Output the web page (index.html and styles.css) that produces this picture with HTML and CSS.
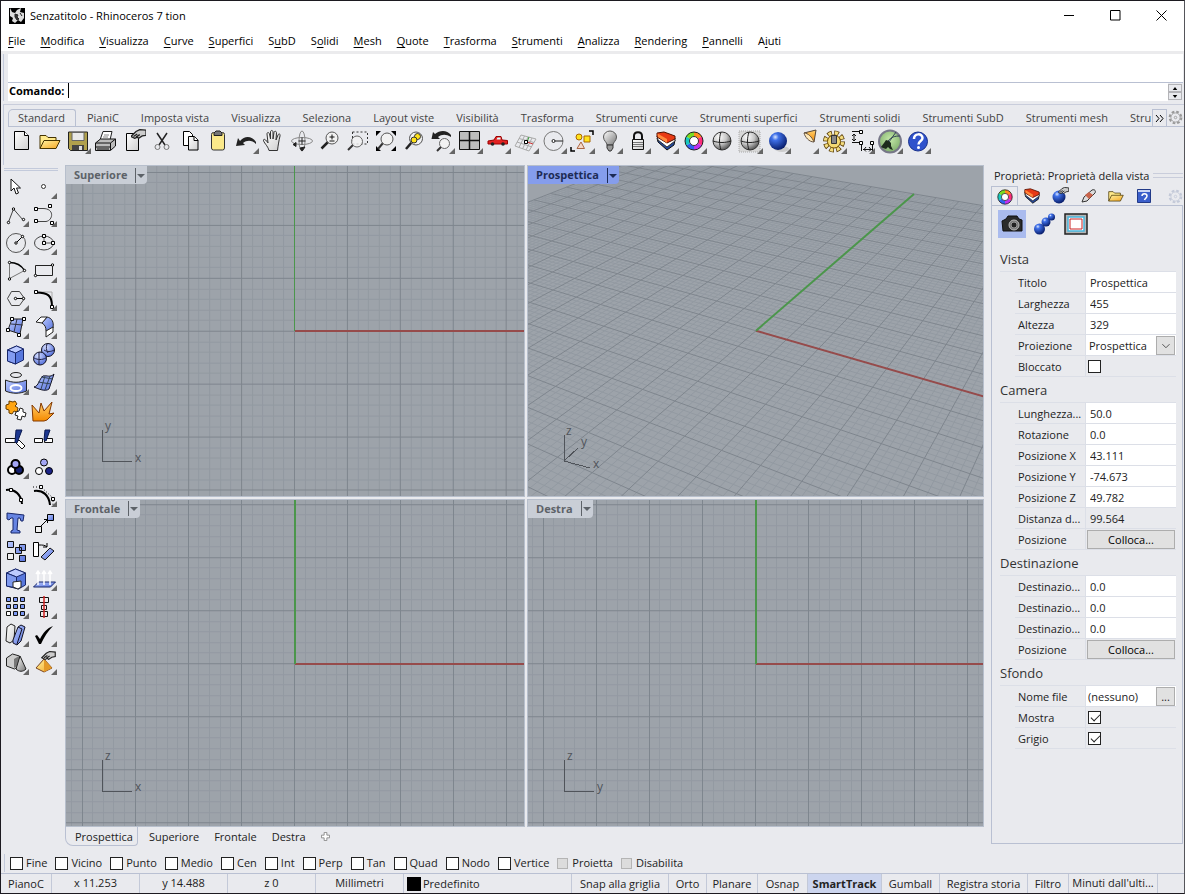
FILE: index.html
```html
<!doctype html>
<html lang="it">
<head>
	<title>Senzatitolo - Rhinoceros 7 tion</title>
	<meta charset="utf-8" />
	<link rel="stylesheet" href="styles.css">
</head>
<body>
	<svg class="defs" aria-hidden="true">
		<defs>
			<linearGradient id="paper" x2="1" y2="1"><stop offset="0" stop-color="#fff"/><stop offset="1" stop-color="#cfcfcf"/></linearGradient>
			<linearGradient id="yellow" x2="1" y2="1"><stop offset="0" stop-color="#fff3a0"/><stop offset="1" stop-color="#f5a623"/></linearGradient>
			<linearGradient id="orange" x2="0" y2="1"><stop offset="0" stop-color="#ffd070"/><stop offset="1" stop-color="#f58a00"/></linearGradient>
			<linearGradient id="blue" x2="1" y2="1"><stop offset="0" stop-color="#bccbff"/><stop offset="1" stop-color="#5672dc"/></linearGradient>
			<linearGradient id="grey" x2="1" y2="1"><stop offset="0" stop-color="#fff"/><stop offset="1" stop-color="#777"/></linearGradient>
			<radialGradient id="ballblue" cx=".35" cy=".28" r=".75"><stop offset="0" stop-color="#dbe7ff"/><stop offset=".25" stop-color="#3f70e8"/><stop offset="1" stop-color="#061a66"/></radialGradient>
			<radialGradient id="ballgrey" cx=".35" cy=".28" r=".8"><stop offset="0" stop-color="#fff"/><stop offset=".5" stop-color="#c5c5c5"/><stop offset="1" stop-color="#444"/></radialGradient>
			<radialGradient id="balllight" cx=".35" cy=".28" r=".8"><stop offset="0" stop-color="#d5deff"/><stop offset="1" stop-color="#4a67d8"/></radialGradient>
			<radialGradient id="green" cx=".5" cy=".4" r=".6"><stop offset="0" stop-color="#c4e8a8"/><stop offset="1" stop-color="#7fae6c"/></radialGradient>
			<symbol id="more" viewBox="0 0 28 28"><path d="M27 20v6h-6z" fill="#666"/></symbol>
			<symbol id="wheel" viewBox="0 0 20 20">
				<g fill="none" stroke-width="5"><path d="M10 3.500A6.500 6.500 0 0 1 15.600 6.700" stroke="#ff8c1a"/><path d="M15.600 6.700A6.500 6.500 0 0 1 15.600 13.200" stroke="#ff2d7a"/><path d="M15.600 13.200A6.500 6.500 0 0 1 10 16.500" stroke="#c030f0"/><path d="M10 16.500A6.500 6.500 0 0 1 4.400 13.200" stroke="#3060f0"/><path d="M4.400 13.200A6.500 6.500 0 0 1 4.400 6.700" stroke="#18c8c0"/><path d="M4.400 6.700A6.500 6.500 0 0 1 10 3.500" stroke="#7ade20"/></g>
				<circle cx="10" cy="10" r="9" fill="none" stroke="#222"/><circle cx="10" cy="10" r="4.500" fill="#fff" stroke="#333"/>
			</symbol>
			<symbol id="layers" viewBox="0 0 20 20">
				<path d="M1 7l10 6 8-4-1 5-7 5L2 11z" fill="#24489c" stroke="#111"/><path d="M1 5l10 6 8-4v3l-8 6L2 9z" fill="#fff" stroke="#333"/><path d="M1 2l7-1 11 4v3l-8 4L1 6z" fill="#e83a14" stroke="#501000"/><path d="M1.500 2.500L11 8v4L2 6z" fill="#ff8a3c"/>
			</symbol>
			<symbol id="cog" viewBox="0 0 18 18">
				<circle cx="9" cy="9" r="7" fill="none" stroke="currentColor" stroke-width="2.500" stroke-dasharray="3.200 2.300"/><circle cx="9" cy="9" r="5.500" fill="none" stroke="currentColor"/><circle cx="9" cy="9" r="1.500" fill="none" stroke="currentColor"/>
			</symbol>
			<symbol id="hand" viewBox="0 0 12 8"><path d="M0 6l4-4 3-1.500L12 1v4l-3 .5-3 2-1-1-2 1z" fill="#ccc" stroke="#222"/><path d="M2 6l3-2M4 6.500l3-2" stroke="#222" fill="none"/></symbol>
			<symbol id="folder" viewBox="0 0 22 16"><path d="M1 15V2h6l2 2h8v3" fill="#ffe98a" stroke="#443300"/><path d="M1 15l4-8h16l-4 8z" fill="url(#yellow)" stroke="#443300"/></symbol>
		</defs>
	</svg>

	<header class="titlebar">
		<svg class="logo" viewBox="0 0 16 16"><path d="M0 0h16v16H0z"/><path d="M1 0l2 4 3 1 2-3 4-2-1 4 4 1v5l-3 4-3-2-3 3-3-2 1-3-3-2z" fill="#ddd"/><path d="M6 6l3 1-1 2 2 2-2 1-2-3zM11 5l2 3" fill="#333" stroke="#222"/></svg>
		<span class="title">Senzatitolo - Rhinoceros 7 tion</span>
		<div class="window-buttons">
			<button aria-label="Riduci"><svg viewBox="0 0 11 11"><path d="M0 5.500h10"/></svg></button>
			<button aria-label="Ingrandisci"><svg viewBox="0 0 11 11"><path d="M.5.5h9.500v9.500H.5z"/></svg></button>
			<button aria-label="Chiudi"><svg viewBox="0 0 11 11"><path d="M.5.5l10 10M10.500.5l-10 10"/></svg></button>
		</div>
	</header>

	<nav class="menu">
		<a href="#"><u>F</u>ile</a>
		<a href="#"><u>M</u>odifica</a>
		<a href="#"><u>V</u>isualizza</a>
		<a href="#"><u>C</u>urve</a>
		<a href="#"><u>S</u>uperfici</a>
		<a href="#">S<u>u</u>bD</a>
		<a href="#">S<u>o</u>lidi</a>
		<a href="#"><u>M</u>esh</a>
		<a href="#"><u>Q</u>uote</a>
		<a href="#"><u>T</u>rasforma</a>
		<a href="#"><u>S</u>trumenti</a>
		<a href="#"><u>A</u>nalizza</a>
		<a href="#"><u>R</u>endering</a>
		<a href="#"><u>P</u>annelli</a>
		<a href="#">A<u>i</u>uti</a>
	</nav>

	<section class="command">
		<div class="history"></div>
		<div class="prompt">
			<label for="cmd">Comando:</label>
			<span class="caret"></span>
			<input id="cmd" type="text">
			<div class="spin">
				<button aria-label="Su"><svg viewBox="0 0 6 4"><path d="M0 4l3-4 3 4z"/></svg></button>
				<button aria-label="Giù"><svg viewBox="0 0 6 4"><path d="M0 0l3 4 3-4z"/></svg></button>
			</div>
		</div>
	</section>

	<div class="tabs">
		<div class="tab-list">
			<button class="tab active">Standard</button>
			<button class="tab">PianiC</button>
			<button class="tab">Imposta vista</button>
			<button class="tab">Visualizza</button>
			<button class="tab">Seleziona</button>
			<button class="tab">Layout viste</button>
			<button class="tab">Visibilità</button>
			<button class="tab">Trasforma</button>
			<button class="tab">Strumenti curve</button>
			<button class="tab">Strumenti superfici</button>
			<button class="tab">Strumenti solidi</button>
			<button class="tab">Strumenti SubD</button>
			<button class="tab">Strumenti mesh</button>
			<button class="tab last">Stru</button>
		</div>
		<button class="tab-more" aria-label="Altre schede"><svg viewBox="0 0 9 7"><path d="M1 0l3 3.500L1 7M5 0l3 3.500L5 7"/></svg></button>
		<button class="tab-cog" aria-label="Opzioni"><svg><use href="#cog"/></svg></button>
	</div>

	<div class="toolbar">
		<button aria-label="Nuovo"><svg viewBox="0 0 28 28"><path d="M6.500 3.500h10l4 4v14h-14z" fill="url(#paper)" stroke="#000"/><path d="M16.500 3.500v4h4" fill="#fff" stroke="#000"/></svg></button>
		<button aria-label="Apri"><svg viewBox="0 0 28 28"><use href="#folder" x="3" y="5.500" width="22" height="16"/></svg></button>
		<button aria-label="Salva"><svg viewBox="0 0 28 28"><path d="M4.500 4h19v18.500h-17l-2-2z" fill="#b0a04c" stroke="#222"/><path d="M8 4.500h12v8H8z" fill="#e9e9e9" stroke="#666"/><path d="M8 17h12v5H8z" fill="#444"/><path d="M15 18h3v4h-3z" fill="#ddd"/><use href="#more"/></svg></button>
		<button aria-label="Stampa"><svg viewBox="0 0 28 28"><path d="M8 12l3-8.500h9l-2 8.500" fill="#fff" stroke="#222"/><path d="M12 7h5M11 9h5" stroke="#888"/><path d="M3.500 15l5-4h15v7l-5 4.500h-15z" fill="#bbb" stroke="#111"/><path d="M3.500 15h15l5-4M18.500 15v7M4 19h14M5 21h12" stroke="#111" fill="none"/></svg></button>
		<button aria-label="Proprietà documento"><svg viewBox="0 0 28 28"><path d="M6.500 5.500h12v17h-12z" fill="url(#paper)" stroke="#000"/><use href="#hand" x="11" y="1" width="15" height="10"/></svg></button>
		<button aria-label="Taglia"><svg viewBox="0 0 28 28"><path d="M9 5l8 12M19 5l-8 12" stroke="#222" stroke-width="1.500"/><circle cx="9.500" cy="19" r="2.500" fill="none" stroke="#777"/><circle cx="18.500" cy="19" r="2.500" fill="none" stroke="#777"/></svg></button>
		<button aria-label="Copia"><svg viewBox="0 0 28 28"><path d="M7.500 3.500h6l3 3v11h-9z" fill="#fff" stroke="#000"/><path d="M12.500 8.500h6l3.500 3.500v10h-9.500z" fill="url(#paper)" stroke="#000"/><path d="M18 8.500v4h4" fill="#fff" stroke="#000"/></svg></button>
		<button aria-label="Incolla"><svg viewBox="0 0 28 28"><rect x="7.500" y="4.500" width="13" height="17.500" rx="2" fill="#fbe98a" stroke="#333"/><path d="M10 7.500V5l2-2h4l2 2v2.500z" fill="#777" stroke="#222"/></svg></button>
		<button aria-label="Annulla"><svg viewBox="0 0 28 28"><path d="M4 18l2-8 2 3c5-6 12-5 16 1v2c-4-4-9-4-13-1l2 2z" fill="#222"/><use href="#more"/></svg></button>
		<button aria-label="Panoramica"><svg viewBox="0 0 28 28"><path d="M9 22.500C8 18 3 14 3.500 12s3 .5 4.500 3L7 6c0-2 2-2 2.500 0l1 5V4c0-2 2.500-2 2.500 0v7l1-6.500c.5-2 2.500-1.500 2.500.5L16 12l2-5c1-2 2.500-1 2 1-1 4-2 10-2.500 14.500z" fill="url(#paper)" stroke="#333"/></svg></button>
		<button aria-label="Ruota vista"><svg viewBox="0 0 28 28"><ellipse cx="14" cy="13" rx="10.500" ry="3.500" fill="none" stroke="#888"/><ellipse cx="14" cy="13" rx="3" ry="10" fill="none" stroke="#888"/><path d="M14 9.500v7M10.500 13h7M8 14.500v4l-3-2zM12 20l5-1-3 4z" fill="#222" stroke="#222" stroke-width="1"/></svg></button>
		<button aria-label="Zoom dinamico"><svg viewBox="0 0 28 28"><path d="M12 14l-6.500 6.500" stroke="#222" stroke-width="2.500"/><circle cx="16" cy="10" r="6" fill="#f2f2f2" stroke="#555"/><path d="M16 6.500v5M13.500 9h5M13.500 13h5" stroke="#111"/></svg></button>
		<button aria-label="Zoom finestra"><svg viewBox="0 0 28 28"><path d="M8.500 4h15v12h-15z" fill="none" stroke="#333" stroke-dasharray="2 2"/><path d="M9 17l-5 5" stroke="#333" stroke-width="2"/><circle cx="13" cy="13.500" r="5.500" fill="#f2f2f2cc" stroke="#666"/></svg></button>
		<button aria-label="Zoom estensioni"><svg viewBox="0 0 28 28"><path d="M4 3h5L4 8zM24 3v5l-5-5zM24 23h-5l5-5zM4 23v-5l5 5z"/><path d="M11 15l-5 6" stroke="#333" stroke-width="2"/><circle cx="15" cy="11" r="6" fill="#f2f2f2" stroke="#555"/></svg></button>
		<button aria-label="Zoom selezionati"><svg viewBox="0 0 28 28"><path d="M12 14l-6 7" stroke="#222" stroke-width="2.500"/><circle cx="16" cy="10.500" r="6.500" fill="#f2f2f2" stroke="#555"/><circle cx="17.500" cy="8.500" r="3" fill="#ffe21a" stroke="#333"/><circle cx="14" cy="12" r="3" fill="#ffe21a" stroke="#333"/></svg></button>
		<button aria-label="Annulla vista"><svg viewBox="0 0 28 28"><path d="M3.500 11L5 4l2 2c5-4 12-4 16 1v2c-5-3-9-3-13 0l2 2z" fill="#222"/><path d="M14 18l-5 5" stroke="#333" stroke-width="2"/><circle cx="16.500" cy="15.500" r="5" fill="#f2f2f2" stroke="#666"/><use href="#more"/></svg></button>
		<button aria-label="Quattro viste"><svg viewBox="0 0 28 28"><path d="M3.500 3.500h20v18h-20z" fill="#bdbdbd" stroke="#111"/><path d="M13.500 3.500v18M3.500 12.500h20" stroke="#111" stroke-width="1.500"/><use href="#more"/></svg></button>
		<button aria-label="Vista destra"><svg viewBox="0 0 28 28"><path d="M4 16v-3l6-1 2-3.500h5l1 3.500 5.500.5V16z" fill="#e32222" stroke="#9a0000"/><path d="M12.500 11.500l1-2h3v2z" fill="#dff"/><circle cx="8.500" cy="16" r="1.800" fill="#222"/><circle cx="19" cy="16" r="1.800" fill="#222"/><use href="#more"/></svg></button>
		<button aria-label="Piano di costruzione"><svg viewBox="0 0 28 28"><path d="M9 7l15 4-7 12L3 18zM12.500 8L7 19.500M16 9l-5.500 12M20 10l-6 12M7 10.500l15 4M5 14l15 5" fill="none" stroke="#aaa"/><path d="M15 14l6 2" stroke="#c33"/><path d="M15 14l2-5" stroke="#393"/><path d="M12.500 12.500h3v3h-3z" fill="#fff" stroke="#000"/><use href="#more"/></svg></button>
		<button aria-label="Oggetto snap"><svg viewBox="0 0 28 28"><circle cx="13.500" cy="13" r="9.500" fill="none" stroke="#777"/><path d="M13.500 13H23" stroke="#222"/><circle cx="13.500" cy="13" r="1.500" fill="#fff" stroke="#222"/><use href="#more"/></svg></button>
		<button aria-label="Seleziona oggetti"><svg viewBox="0 0 28 28"><path d="M21 3h4v4M7 23H3v-4" fill="none" stroke="#000" stroke-width="1.500"/><circle cx="11" cy="9" r="3" fill="#ffe21a" stroke="#a60"/><path d="M16 8h6v6h-6z" fill="#ffe21a" stroke="#a60"/><path d="M13 14l3.500 6.500H9z" fill="#f4d8c8" stroke="#a64"/><use href="#more"/></svg></button>
		<button aria-label="Nascondi"><svg viewBox="0 0 28 28"><path d="M11 17c0-3-3.500-4-3.500-8a6.500 6 0 0 1 13 0c0 4-3.500 5-3.500 8z" fill="url(#grey)" stroke="#555"/><path d="M11 17h6v3l-2 3h-2l-2-3z" fill="#999" stroke="#333"/><use href="#more"/></svg></button>
		<button aria-label="Blocca"><svg viewBox="0 0 28 28"><path d="M10 13V8c0-5 8-5 8 0v5" fill="none" stroke="#111" stroke-width="2"/><path d="M8.500 11.500h11v10h-11z" fill="url(#paper)" stroke="#111"/><path d="M9 14.500h10M9 16.500h10M9 18.500h10" stroke="#777"/><use href="#more"/></svg></button>
		<button aria-label="Livelli"><svg viewBox="0 0 28 28"><use href="#layers" x="4" y="3" width="20" height="20"/><use href="#more"/></svg></button>
		<button aria-label="Proprietà"><svg viewBox="0 0 28 28"><use href="#wheel" x="4" y="3" width="20" height="20"/><use href="#more"/></svg></button>
		<button aria-label="Ombreggia"><svg viewBox="0 0 28 28"><circle cx="14" cy="13" r="9" fill="url(#ballgrey)" stroke="#333"/><path d="M13 4c-2 6-2 12 0 18M5 13c6 2 12 2 18 0" fill="none" stroke="#222"/></svg></button>
		<button aria-label="Ombreggia selezionati"><svg viewBox="0 0 28 28"><path d="M3 3h21v21H3z" fill="#d8d8d8" stroke="#aaa" stroke-dasharray="1 1"/><circle cx="14" cy="13" r="9" fill="url(#ballgrey)" stroke="#333"/><path d="M13 4c-2 6-2 12 0 18M5 13c6 2 12 2 18 0" fill="none" stroke="#222"/><use href="#more"/></svg></button>
		<button aria-label="Rendering"><svg viewBox="0 0 28 28"><ellipse cx="18" cy="21" rx="7" ry="3" fill="#ccc"/><circle cx="14" cy="13" r="9" fill="url(#ballblue)"/><use href="#more"/></svg></button>
		<button aria-label="Luci"><svg viewBox="0 0 28 28"><path d="M12 5l12-3-2 12z" fill="url(#orange)" stroke="#543"/><path d="M12 5c4 0 8 4 10 9-5 0-9-5-10-9z" fill="#ffe9b8" stroke="#654"/><use href="#more"/></svg></button>
		<button aria-label="Opzioni"><svg viewBox="0 0 28 28"><circle cx="14" cy="13.500" r="8.500" fill="none" stroke="#543800" stroke-width="5" stroke-dasharray="4.400 2.275"/><circle cx="14" cy="13.500" r="8.500" fill="none" stroke="#f4dd80" stroke-width="3.500" stroke-dasharray="3 3.675" stroke-dashoffset="-.7"/><circle cx="14" cy="13.500" r="6.500" fill="#f2d874" stroke="#765000"/><path d="M11.500 7.500h5v8h-5z" fill="#888" stroke="#333"/><use href="#more"/></svg></button>
		<button aria-label="Quote"><svg viewBox="0 0 28 28"><path d="M4 3.500h7M6 6v7M4 14.500h8M13.500 16v7M15 21.500h9M24.500 16v7M4 8l2-2 2 2M4 11l2 2 2-2M18 19l-2 2.500 2 2M21 19l2 2.500-2 2" fill="none" stroke="#111"/><path d="M11.500 2.500h3v3h-3zM11.500 13.500h3v3h-3zM22.500 13.500h3v3h-3z" fill="#fff" stroke="#000"/><use href="#more"/></svg></button>
		<button aria-label="Grasshopper"><svg viewBox="0 0 28 28"><circle cx="14" cy="13.500" r="11" fill="url(#green)" stroke="#778" stroke-width="2"/><path d="M5 19l3-4 2-3 3 1 2 2v3l2 4-3-1-2-2-2 2-3-1z" fill="#1d2c1c"/><path d="M12 13C15 9 19 8 24 8M13 14L20 4" stroke="#345" fill="none"/><use href="#more"/></svg></button>
		<button aria-label="Guida"><svg viewBox="0 0 28 28"><circle cx="14" cy="13.500" r="9.500" fill="#2f52cc" stroke="#18308c"/><path d="M10 11c0-6 8.500-6 8.500-1 0 3-4 3-4 6.500" fill="none" stroke="#fff" stroke-width="2.500"/><circle cx="14.500" cy="19.500" r="1.500" fill="#fff"/><use href="#more"/></svg></button>
	</div>

	<main class="workspace">
		<aside class="toolbox">
			<button aria-label="Seleziona"><svg viewBox="0 0 28 28"><path d="M9 6v12l3-3 2 6 2.500-1-2-5h4z" fill="#fff" stroke="#111"/></svg></button>
			<button aria-label="Punto"><svg viewBox="0 0 28 28"><circle cx="13.500" cy="13.500" r="2" fill="#fff" stroke="#333"/><use href="#more"/></svg></button>
			<button aria-label="Polilinea"><svg viewBox="0 0 28 28"><path d="M6.500 21l5-13L21 19" fill="none" stroke="#444"/><g fill="#fff" stroke="#000"><circle cx="6.500" cy="21.500" r="1.200"/><circle cx="11.500" cy="8" r="1.200"/><circle cx="21.500" cy="18.500" r="1.200"/></g><use href="#more"/></svg></button>
			<button aria-label="Curva"><svg viewBox="0 0 28 28"><path d="M6 7.500h7c12 0 10 12 3 13H6" fill="none" stroke="#444"/><path d="M4.500 6.500h3v3h-3zM18.500 3.500h3v3h-3zM4.500 18.500h3v3h-3zM20.500 20.500h3v3h-3z" fill="#fff" stroke="#000"/><use href="#more"/></svg></button>
			<button aria-label="Cerchio"><svg viewBox="0 0 28 28"><circle cx="14" cy="14" r="9.500" fill="none" stroke="#555"/><path d="M14 14l6-6" stroke="#000"/><circle cx="14" cy="14" r="1.200" fill="#fff" stroke="#000"/><circle cx="20.500" cy="7.500" r="1.200" fill="#fff" stroke="#000"/><use href="#more"/></svg></button>
			<button aria-label="Ellisse"><svg viewBox="0 0 28 28"><ellipse cx="14" cy="14" rx="9.500" ry="7" fill="none" stroke="#444"/><path d="M14 14V7M14 14h9" stroke="#555"/><path d="M12.500 5.500h3v3h-3zM12.500 12.500h3v3h-3zM21.500 12.500h3v3h-3z" fill="#fff" stroke="#000"/><use href="#more"/></svg></button>
			<button aria-label="Arco"><svg viewBox="0 0 28 28"><path d="M7.500 5.500v16l15-8" fill="none" stroke="#777"/><path d="M7.500 5.500c7 0 12 3 15 8" fill="none" stroke="#000" stroke-width="1.500"/><g fill="#fff" stroke="#000"><circle cx="7.500" cy="5.500" r="1.200"/><circle cx="7.500" cy="22" r="1.200"/><circle cx="22.500" cy="13.500" r="1.200"/></g><use href="#more"/></svg></button>
			<button aria-label="Rettangolo"><svg viewBox="0 0 28 28"><path d="M5.500 8.500h17v10h-17z" fill="none" stroke="#222"/><circle cx="22.500" cy="8" r="1.200" fill="#fff" stroke="#000"/><circle cx="5.500" cy="18.500" r="1.200" fill="#fff" stroke="#000"/><use href="#more"/></svg></button>
			<button aria-label="Poligono"><svg viewBox="0 0 28 28"><path d="M9.500 6.500h8l5 7-5 7h-8l-4-7z" fill="none" stroke="#444"/><path d="M13.500 13.500h8" stroke="#000"/><circle cx="13.500" cy="13.500" r="1.200" fill="#fff" stroke="#000"/><circle cx="21.500" cy="13.500" r="1.200" fill="#fff" stroke="#000"/><use href="#more"/></svg></button>
			<button aria-label="Raccorda curve"><svg viewBox="0 0 28 28"><path d="M6 7h16v15" fill="none" stroke="#aaa"/><path d="M6 7.500c12 0 16 3 16 14" fill="none" stroke="#000" stroke-width="2"/><path d="M4.500 5.500h3v3h-3zM20.500 20.500h3v3h-3z" fill="#fff" stroke="#000"/><use href="#more"/></svg></button>
			<button aria-label="Superficie"><svg viewBox="0 0 28 28"><path d="M10 6h11l-3 15-12-4z" fill="url(#blue)" stroke="#222"/><path d="M15 6l-3 13M9 11l12 1" stroke="#334" fill="none"/><path d="M8.500 4.500h3v3h-3zM20.500 4.500h3v3h-3zM4.500 15.500h3v3h-3zM15.500 20.500h3v3h-3z" fill="#fff" stroke="#000"/><use href="#more"/></svg></button>
			<button aria-label="Raccorda superfici"><svg viewBox="0 0 28 28"><path d="M12 10l5-6c5 1 7 5 6 11l-7 3c0-4-1-6-4-8z" fill="url(#blue)" stroke="#222"/><path d="M6 9l5-5h6l-5 6z" fill="#fff" stroke="#222"/><path d="M16 18l7-4v5l-7 5z" fill="#fff" stroke="#222"/><use href="#more"/></svg></button>
			<button aria-label="Solido"><svg viewBox="0 0 28 28"><path d="M5.500 9l9-4 7 3v11l-8 4-8-3z" fill="#5878dd" stroke="#17266a"/><path d="M5.500 9l9-4 7 3-8 4z" fill="#bccbff" stroke="#17266a"/><path d="M5.500 9l8 3v11l-8-3z" fill="#829bf0" stroke="#17266a"/><use href="#more"/></svg></button>
			<button aria-label="Booleana"><svg viewBox="0 0 28 28"><circle cx="18" cy="9" r="6.500" fill="url(#balllight)" stroke="#112"/><circle cx="10" cy="17.500" r="6.500" fill="url(#balllight)" stroke="#112"/><path d="M9 11v13M4 17c4 2 8 2 12 0M17 3c-1 3-1 6 1 9M14 9c3 2 7 2 10 0" fill="none" stroke="#224"/><use href="#more"/></svg></button>
			<button aria-label="Proietta curva"><svg viewBox="0 0 28 28"><ellipse cx="14" cy="6" rx="5.500" ry="2.500" fill="none" stroke="#222"/><path d="M3.500 11c7 3 14 3 21 0v11c-7 3-14 3-21 0z" fill="url(#blue)" stroke="#222"/><ellipse cx="14" cy="19" rx="5.500" ry="3" fill="none" stroke="#fff" stroke-width="2"/><use href="#more"/></svg></button>
			<button aria-label="Modifica superficie"><svg viewBox="0 0 28 28"><path d="M4 18c5-1 5-8 9-11 4-1 7 2 11-2l-5 15c-4 3-10 0-15-2z" fill="url(#blue)" stroke="#112"/><path d="M8 13l13 2M11 8l12 2M11 20l4-13M15 21l5-14" stroke="#345" fill="none"/><use href="#more"/></svg></button>
			<button aria-label="Esplodi gruppo"><svg viewBox="0 0 28 28"><path d="M4 8l3-1 0-3 4 1 2-1 2 3-2 2 3 2-1 4-3-1-2 3-3-1 0-3-3-1z" fill="#ffa511" stroke="#663c00"/><path d="M14 15l3-1 1-3 3 1 0 3 3 1-1 4-3-1-1 4-4-1 1-3-3-1z" fill="#fff" stroke="#222"/></svg></button>
			<button aria-label="Esplodi"><svg viewBox="0 0 28 28"><path d="M3 24L2 8l7 8 2-10 3 8 8-9-3 12 5-1-7 7-3 1z" fill="url(#orange)" stroke="#833800"/></svg></button>
			<button aria-label="Tronca"><svg viewBox="0 0 28 28"><path d="M3.500 13.500h10v4h-10zM17 15l6 6-3 3-6-6z" fill="#fff" stroke="#111"/><path d="M14 5h6l-5 13-2-1z" fill="#1c3790" stroke="#0a1a50"/></svg></button>
			<button aria-label="Suddividi"><svg viewBox="0 0 28 28"><path d="M4.500 13.500h8v4h-8zM14.500 13.500h8v4h-8z" fill="#fff" stroke="#111"/><path d="M15 5h5l-4 11-2-1z" fill="#1c3790" stroke="#0a1a50"/></svg></button>
			<button aria-label="Raggruppa"><svg viewBox="0 0 28 28"><g stroke="#000" stroke-width="2"><circle cx="10" cy="17" r="4" fill="#fff"/><circle cx="17" cy="17" r="4" fill="#14206e"/><circle cx="13.500" cy="11" r="4" fill="#a3a6f5"/></g><use href="#more"/></svg></button>
			<button aria-label="Separa"><svg viewBox="0 0 28 28"><g stroke="#000"><circle cx="9" cy="18" r="3.500" fill="#fff"/><circle cx="19" cy="18" r="3.500" fill="#1b2388"/><circle cx="14" cy="9.500" r="3.500" fill="#a3a6f5"/></g></svg></button>
			<button aria-label="Punti di controllo"><svg viewBox="0 0 28 28"><path d="M4 9c9-1 15 4 16 14" fill="none" stroke="#000" stroke-width="2"/><path d="M7.500 7.500h3v3h-3zM17.500 17.500h3v3h-3z" fill="#fff" stroke="#000"/></svg></button>
			<button aria-label="Attiva punti"><svg viewBox="0 0 28 28"><path d="M4 10c9-1 15 4 16 14" fill="none" stroke="#000" stroke-width="2"/><path d="M3 6h8l12 11v9" fill="none" stroke="#000" stroke-dasharray="1 2"/><path d="M9.500 4.500h3v3h-3zM21.500 16.500h3v3h-3z" fill="#fff" stroke="#000"/><use href="#more"/></svg></button>
			<button aria-label="Testo"><svg viewBox="0 0 28 28"><path d="M5 4l17 2-1 6h-2l-1-3h-2l-1 12 3 1v2H9v-2l2-1V9H9l-2 2-2-1z" fill="#6684e2" stroke="#17266a"/></svg></button>
			<button aria-label="Sposta"><svg viewBox="0 0 28 28"><path d="M11 17l6-6M14 10.500h3.500V14" fill="none" stroke="#000"/><path d="M17.500 5.500h6v6h-6z" fill="url(#blue)" stroke="#000"/><path d="M5.500 17.500h6v6h-6z" fill="#eee" stroke="#000"/><use href="#more"/></svg></button>
			<button aria-label="Copia oggetti"><svg viewBox="0 0 28 28"><g fill="url(#blue)" stroke="#111"><path d="M5.500 4.500h6v6h-6zM17.500 7.500h6v6h-6zM13.500 10.500h6v6h-6zM17.500 18.500h6v6h-6z"/></g><path d="M5.500 16.500h6v6h-6z" fill="#eee" stroke="#111"/></svg></button>
			<button aria-label="Ruota"><svg viewBox="0 0 28 28"><path d="M3.500 5.500h5v14h-5z" fill="#fff" stroke="#000"/><path d="M9 8c4 0 6 0 8 2M17 6v4h-4" fill="none" stroke="#000"/><path d="M11 20l9-9 4 3-9 9z" fill="url(#blue)" stroke="#111"/></svg></button>
			<button aria-label="Sottrazione"><svg viewBox="0 0 28 28"><path d="M4.500 8l9-4 10 4v12l-7 4-12-3z" fill="#5878dd" stroke="#17266a"/><path d="M4.500 8l9-4 10 4-9 4z" fill="#bccbff" stroke="#17266a"/><path d="M4.500 8l10 4v11l-10-2z" fill="#7f9aee" stroke="#17266a"/><path d="M11 17l8-1v6l-3 2-5-2z" fill="#fff" stroke="#222"/><use href="#more"/></svg></button>
			<button aria-label="Estrudi"><svg viewBox="0 0 28 28"><path d="M3.500 22l5-5h17l-5 5z" fill="url(#blue)" stroke="#17266a"/><path d="M8 20V7M14 20V7M20 20V7M6 9l2-3 2 3M12 9l2-3 2 3M18 9l2-3 2 3" fill="none" stroke="#fff" stroke-width="1.500"/><use href="#more"/></svg></button>
			<button aria-label="Serie"><svg viewBox="0 0 28 28"><path d="M4.500 4.500h4v4h-4zM11.500 4.500h4v4h-4zM18.500 4.500h4v4h-4zM4.500 11.500h4v4h-4zM11.500 11.500h4v4h-4zM18.500 11.500h4v4h-4zM11.500 18.500h4v4h-4zM18.500 18.500h4v4h-4z" fill="#7c98f2" stroke="#111"/><path d="M4.500 18.500h4v4h-4z" fill="#fff" stroke="#111"/><use href="#more"/></svg></button>
			<button aria-label="Allinea"><svg viewBox="0 0 28 28"><path d="M9.500 4.500h9v5h-9zM11.500 12.500h5v4h-5zM10.500 18.500h7v5h-7z" fill="#eee" stroke="#111"/><path d="M14 3v22" stroke="#d02020" stroke-width="1.500"/><use href="#more"/></svg></button>
			<button aria-label="Deforma"><svg viewBox="0 0 28 28"><path d="M5 6l4-3 4 2-1 14-4 3-4-2z" fill="url(#paper)" stroke="#222"/><path d="M11 19l5-13 3-2 4 2-4 14-4 4-4-2z" fill="url(#blue)" stroke="#112"/><path d="M16 6l4 2-5 15" fill="none" stroke="#112"/><use href="#more"/></svg></button>
			<button aria-label="Controlla"><svg viewBox="0 0 28 28"><path d="M5 15l2-1 3 4C13 12 17 7 23 5 18 10 14 16 11 23H9z"/><use href="#more"/></svg></button>
			<button aria-label="Primitive"><svg viewBox="0 0 28 28"><path d="M4.500 9l6-4 7 2v10l-5 3-8-3z" fill="#ccc" stroke="#222"/><path d="M12 10l5-3v9l-5 3z" fill="#777"/><path d="M18 7l6 13c-3 3-7 3-10 0z" fill="url(#grey)" stroke="#222"/><use href="#more"/></svg></button>
			<button aria-label="Modifica solido"><svg viewBox="0 0 28 28"><path d="M14 10l-8 9 8 4 8-4z" fill="url(#yellow)" stroke="#742"/><path d="M14 10v13l8-4z" fill="#e49a28"/><use href="#hand" x="11" y="2" width="15" height="9"/><use href="#more"/></svg></button>
		</aside>

		<section class="views">
			<div class="view-grid">
				<div class="viewport" data-view="top">
					<svg class="cplane"></svg>
					<button class="view-label"><span>Superiore</span><i></i></button>
					<svg class="axes" viewBox="0 0 90 84"><path d="M36 18v31h30"/><text x="39" y="18">y</text><text x="69" y="50">x</text></svg>
				</div>
				<div class="viewport" data-view="perspective">
					<svg class="cplane"></svg>
					<button class="view-label active"><span>Prospettica</span><i></i></button>
					<svg class="axes" viewBox="0 0 90 84"><path d="M36 23v26l26 7M36 49l14-13"/><text x="38" y="23">z</text><text x="53" y="34">y</text><text x="65" y="56">x</text></svg>
				</div>
				<div class="viewport" data-view="front">
					<svg class="cplane"></svg>
					<button class="view-label"><span>Frontale</span><i></i></button>
					<svg class="axes" viewBox="0 0 90 84"><path d="M36 18v31h30"/><text x="39" y="18">z</text><text x="69" y="49">x</text></svg>
				</div>
				<div class="viewport" data-view="right">
					<svg class="cplane"></svg>
					<button class="view-label"><span>Destra</span><i></i></button>
					<svg class="axes" viewBox="0 0 90 84"><path d="M36 18v31h30"/><text x="39" y="18">z</text><text x="69" y="49">y</text></svg>
				</div>
			</div>
			<div class="view-tabs">
				<button class="active">Prospettica</button>
				<button>Superiore</button>
				<button>Frontale</button>
				<button>Destra</button>
				<button aria-label="Nuova vista"><svg viewBox="0 0 10 10"><path d="M3.500.5h3v3h3v3h-3v3h-3v-3h-3v-3h3z"/></svg></button>
			</div>
		</section>

		<aside class="panel">
			<h2>Proprietà: Proprietà della vista</h2>
			<div class="panel-tabs">
				<button class="active" aria-label="Proprietà"><svg viewBox="0 0 20 20"><use href="#wheel" x="2" y="2" width="16" height="16"/></svg></button>
				<button aria-label="Livelli"><svg viewBox="0 0 20 20"><use href="#layers" x="2" y="2" width="16" height="16"/></svg></button>
				<button aria-label="Rendering"><svg viewBox="0 0 20 20"><circle cx="9" cy="11" r="6.500" fill="url(#ballblue)"/><use href="#hand" x="8" y="1" width="11" height="7"/></svg></button>
				<button aria-label="Materiali"><svg viewBox="0 0 20 20"><path d="M4 16l2-5 8-7c3-1 4 1 3 3l-8 8z" fill="#ddd" stroke="#333"/><path d="M7 9l4-3 4 3-4 4z" fill="#c9644c"/></svg></button>
				<button aria-label="Librerie"><svg viewBox="0 0 20 20"><use href="#folder" x="2" y="4" width="16" height="12"/></svg></button>
				<button aria-label="Guida"><svg viewBox="0 0 20 20"><path d="M3.500 3.500h13v13h-13z" fill="#3b5fcb" stroke="#223a88"/><path d="M4 4h12v2H4z" fill="#ccd6f4"/><path d="M8 10c0-3 5-3 5 0 0 2-2 2-2.500 4" fill="none" stroke="#fff" stroke-width="1.500"/></svg></button>
				<button class="cog" aria-label="Opzioni"><svg viewBox="0 0 20 20"><use href="#cog" x="3" y="3" width="15" height="15"/></svg></button>
			</div>
			<div class="panel-body">
				<div class="panel-modes">
					<button class="active" aria-label="Camera"><svg viewBox="0 0 28 28"><path d="M4 11l4-2 2-3h9l2 3 3 1v11H5z" fill="#2b2b2b" stroke="#111"/><circle cx="16" cy="15" r="5" fill="#777" stroke="#bbb"/><circle cx="16" cy="15" r="3" fill="#222" stroke="#999"/></svg></button>
					<button aria-label="Materiale"><svg viewBox="0 0 28 28"><circle cx="9.500" cy="19" r="5.500" fill="url(#ballblue)"/><circle cx="16" cy="12" r="4.500" fill="url(#ballblue)"/><circle cx="21.500" cy="7" r="3.500" fill="url(#ballblue)"/></svg></button>
					<button aria-label="Cornice"><svg viewBox="0 0 28 28"><path d="M3 4h22v20H3z" fill="#b5b5b5" stroke="#222" stroke-width="1.500"/><path d="M6 7h16v14H6z" fill="#fff" stroke="#48b6dd" stroke-width="1.500"/><path d="M8 9h12v10H8z" fill="#fff" stroke="#c22"/></svg></button>
				</div>

				<h3>Vista</h3>
				<div class="props">
					<label for="titolo">Titolo</label><input id="titolo" type="text" value="Prospettica">
					<label for="larghezza">Larghezza</label><input id="larghezza" type="text" value="455">
					<label for="altezza">Altezza</label><input id="altezza" type="text" value="329">
					<label for="proiezione">Proiezione</label>
					<div class="combo"><select id="proiezione"><option>Prospettica</option><option>Parallela</option></select><svg viewBox="0 0 19 19"><path d="M6 8l4 4 4-4"/></svg></div>
					<label for="bloccato">Bloccato</label><div class="cell"><input id="bloccato" type="checkbox"></div>
				</div>

				<h3>Camera</h3>
				<div class="props">
					<label for="lente">Lunghezza...</label><input id="lente" type="text" value="50.0">
					<label for="rot">Rotazione</label><input id="rot" type="text" value="0.0">
					<label for="camx">Posizione X</label><input id="camx" type="text" value="43.111">
					<label for="camy">Posizione Y</label><input id="camy" type="text" value="-74.673">
					<label for="camz">Posizione Z</label><input id="camz" type="text" value="49.782">
					<label for="dist">Distanza d...</label><input id="dist" type="text" value="99.564" readonly>
					<label for="campos">Posizione</label><div class="cell"><button id="campos" class="push">Colloca...</button></div>
				</div>

				<h3>Destinazione</h3>
				<div class="props">
					<label for="tx">Destinazio...</label><input id="tx" type="text" value="0.0">
					<label for="ty">Destinazio...</label><input id="ty" type="text" value="0.0">
					<label for="tz">Destinazio...</label><input id="tz" type="text" value="0.0">
					<label for="tpos">Posizione</label><div class="cell"><button id="tpos" class="push">Colloca...</button></div>
				</div>

				<h3>Sfondo</h3>
				<div class="props">
					<label for="nome">Nome file</label>
					<div class="file"><input id="nome" type="text" value="(nessuno)"><button class="push" aria-label="Sfoglia">...</button></div>
					<label for="mostra">Mostra</label><div class="cell"><input id="mostra" type="checkbox" checked></div>
					<label for="grigio">Grigio</label><div class="cell"><input id="grigio" type="checkbox" checked></div>
				</div>
			</div>
		</aside>
	</main>

	<div class="osnap">
		<label><input type="checkbox">Fine</label>
		<label><input type="checkbox">Vicino</label>
		<label><input type="checkbox">Punto</label>
		<label><input type="checkbox">Medio</label>
		<label><input type="checkbox">Cen</label>
		<label><input type="checkbox">Int</label>
		<label><input type="checkbox">Perp</label>
		<label><input type="checkbox">Tan</label>
		<label><input type="checkbox">Quad</label>
		<label><input type="checkbox">Nodo</label>
		<label><input type="checkbox">Vertice</label>
		<label><input class="small" type="checkbox" disabled>Proietta</label>
		<label><input class="small" type="checkbox" disabled>Disabilita</label>
	</div>

	<footer class="status">
		<button>PianoC</button>
		<span>x 11.253</span>
		<span>y 14.488</span>
		<span>z 0</span>
		<span>Millimetri</span>
		<button class="layer"><i></i>Predefinito</button>
		<button>Snap alla griglia</button>
		<button>Orto</button>
		<button>Planare</button>
		<button>Osnap</button>
		<button class="on">SmartTrack</button>
		<button>Gumball</button>
		<button>Registra storia</button>
		<button>Filtro</button>
		<span>Minuti dall'ulti...</span>
	</footer>

	<script src="grid.js"></script>
</body>
</html>
```
FILE: styles.css
```css
* {
	box-sizing: border-box;
}
html, body {
	height: 100%;
	margin: 0;
	overflow: hidden;
}
body {
	display: flex;
	flex-direction: column;
	border: 1px solid #1c1a20;
	border-right-color: #55555a;
	background-color: #e9eaee;
	font-family: "Open Sans", "Noto Sans", sans-serif;
	font-size: 11px;
	line-height: 16px;
	color: #222;
}
button, input, select {
	font: inherit;
	color: inherit;
	margin: 0;
	padding: 0;
	border: 0;
	border-radius: 0;
	background: none;
	min-width: 0;
}
svg {
	display: block;
}
.defs {
	position: absolute;
	width: 0;
	height: 0;
}

/* title bar and menu */
.titlebar {
	display: flex;
	align-items: center;
	height: 29px;
	flex: none;
	padding-left: 8px;
	background-color: #fff;
	color: #000;
}
.logo {
	width: 16px;
	height: 16px;
	margin-right: 5px;
}
.window-buttons {
	display: flex;
	margin-left: auto;
}
.window-buttons button {
	display: flex;
	justify-content: center;
	align-items: center;
	width: 46px;
	height: 29px;
}
.window-buttons svg {
	width: 11px;
	height: 11px;
	fill: none;
	stroke: #000;
}
.menu {
	display: flex;
	gap: 15px;
	flex: none;
	height: 24px;
	padding: 3px 7px;
	background-color: #fff;
	border-bottom: 3px solid #ebebed;
}
.menu a {
	color: #000;
	text-decoration: none;
}
.menu u {
	text-underline-offset: 2px;
}

/* command line */
.command {
	flex: none;
	margin: 0 1px 3px 2px;
	padding-left: 4px;
	border-left: 1px solid #c3cadb;
}
.history {
	height: 29px;
	background-color: #fff;
	border-bottom: 1px solid #b9c0d2;
}
.prompt {
	display: flex;
	height: 18px;
	padding-left: 1px;
	background-color: #fff;
	color: #000;
}
.prompt label {
	font-weight: bold;
}
.caret {
	width: 1px;
	height: 15px;
	margin-left: 4px;
	background-color: #000;
}
.prompt input {
	flex: 1;
	outline: none;
}
.spin {
	display: flex;
	flex-direction: column;
	width: 15px;
	padding: 1px 1px 1px 0;
	background-color: #e9eaee;
}
.spin button {
	display: flex;
	flex: 1;
	justify-content: center;
	align-items: center;
	border: 1px solid #b4b4b8;
}
.spin svg {
	width: 6px;
	height: 3px;
}

/* toolbar tabs */
.tabs {
	display: flex;
	flex: none;
	height: 23px;
	margin-left: 2px;
	padding: 4px 0 0 4px;
	border-top: 1px solid #c9cddb;
	border-left: 1px solid #c3cadb;
}
.tab-list {
	display: flex;
	flex: 1;
	min-width: 0;
	overflow: hidden;
	border-bottom: 1px solid #b9c0d2;
}
.tab {
	flex: none;
	padding: 0 11px;
	color: #444;
}
.tab.active {
	padding: 0 10px 0 9px;
	border: 1px solid #b9c0d2;
	border-bottom: 0;
	border-radius: 5px 3px 0 0;
}
.tab.last {
	padding-right: 0;
}
.tab-more, .tab-cog {
	display: flex;
	justify-content: center;
	align-items: center;
	width: 15px;
	border: 1px solid #b9c0d2;
}
.tab-more svg {
	width: 9px;
	height: 7px;
	fill: none;
	stroke: #000;
}
.tab-cog {
	width: 17px;
	border-width: 0 0 1px;
	color: #999;
}
.tab-cog svg {
	width: 15px;
	height: 15px;
}

.toolbar {
	display: flex;
	flex: none;
	height: 38px;
	margin-left: 2px;
	padding: 1px 0 0 4px;
	border-left: 1px solid #c3cadb;
}
.toolbar button, .toolbox button {
	width: 28px;
	height: 28px;
	flex: none;
}
.toolbar svg, .toolbox svg {
	width: 28px;
	height: 28px;
}

/* workspace */
.workspace {
	display: flex;
	flex: 1;
	min-height: 0;
}
.toolbox {
	display: grid;
	grid-template-columns: 28px 28px;
	grid-auto-rows: 28px;
	align-content: start;
	flex: none;
	width: 64px;
	margin-top: 3px;
	padding: 5px 1px 0;
	background: linear-gradient(#c3cadb, #c3cadb) 3px 0 / 54px 1px no-repeat,
		linear-gradient(#c3cadb, #c3cadb) 3px 2px / 54px 1px no-repeat;
}
.views {
	display: flex;
	flex-direction: column;
	flex: 1;
	min-width: 0;
}
.view-grid {
	display: grid;
	grid-template-columns: 460fr 457fr;
	grid-template-rows: 331fr 328fr;
	gap: 2px;
	flex: 1;
	min-height: 0;
}
.viewport {
	position: relative;
	overflow: hidden;
	border: 1px solid #b7bfcc;
	background-color: #9da3aa;
}
.cplane {
	position: absolute;
	width: 100%;
	height: 100%;
}
.cplane path {
	fill: none;
	stroke-width: 1;
}
.cplane .thin {
	stroke: #939aa2;
}
.cplane .thick {
	stroke: #7e868e;
}
.cplane .x-axis {
	stroke: #964b4b;
	stroke-width: 2;
}
.cplane .y-axis {
	stroke: #4b964b;
	stroke-width: 2;
}
.view-label {
	position: absolute;
	top: 0;
	left: 0;
	display: flex;
	align-items: center;
	height: 18px;
	padding: 0 2px 0 8px;
	border-radius: 0 0 4px 0;
	background-color: #c9ced6;
	color: #5d6268;
	font-weight: bold;
}
.view-label span {
	padding-right: 8px;
}
.view-label i {
	height: 15px;
	padding-left: 1px;
	border-left: 1px solid currentColor;
}
.view-label i::after {
	content: "";
	display: block;
	margin-top: 6px;
	border: 4px solid transparent;
	border-top-color: currentColor;
	border-bottom: 0;
}
.view-label.active {
	background-color: #859dec;
	color: #1d2b55;
}
.axes {
	position: absolute;
	left: 0;
	bottom: 0;
	width: 90px;
	height: 84px;
	font-size: 12px;
	fill: #50545a;
}
.axes path {
	fill: none;
	stroke: #50545a;
	shape-rendering: crispEdges;
}
.view-tabs {
	display: flex;
	gap: 1px;
	flex: none;
	height: 19px;
}
.view-tabs button {
	padding: 2px 7px;
}
.view-tabs .active {
	padding: 2px 4px 2px 9px;
	border: 1px solid #b9c0d2;
	border-top: 0;
	border-radius: 0 0 4px 8px;
	margin-right: 3px;
}
.view-tabs svg {
	width: 9px;
	height: 9px;
	fill: #fff;
	stroke: #888;
}

/* properties panel */
.panel {
	display: flex;
	flex-direction: column;
	flex: none;
	width: 200px;
	padding: 0 1px 2px 7px;
}
.panel h2 {
	display: flex;
	align-items: center;
	gap: 4px;
	margin: 0;
	padding-left: 3px;
	height: 21px;
	font-size: 11px;
	font-weight: normal;
	white-space: nowrap;
}
.panel h2::after {
	content: "";
	flex: 1;
	height: 3px;
	border: 1px solid #c9cddb;
	border-width: 1px 0;
}
.panel-tabs {
	display: flex;
	height: 20px;
	overflow: hidden;
	border-bottom: 1px solid #b9c0d2;
}
.panel-tabs button {
	display: flex;
	justify-content: center;
	flex: none;
	width: 28px;
}
.panel-tabs .active {
	width: 27px;
	border: 1px solid #b9c0d2;
	border-bottom: 0;
}
.panel-tabs .cog {
	width: 33px;
	color: #c3c9d8;
}
.panel-tabs svg {
	width: 20px;
	height: 20px;
}
.panel-body {
	flex: 1;
	padding: 4px 6px 0;
	border: 1px solid #b9c0d2;
	border-top: 0;
}
.panel-modes {
	display: flex;
	gap: 4px;
	margin-bottom: 8px;
}
.panel-modes button {
	width: 28px;
	height: 28px;
}
.panel-modes .active {
	background-color: #aabbee;
}
.panel h3 {
	height: 26px;
	margin: 0 0 0 2px;
	border-bottom: 1px solid #dcdfe7;
	font-size: 13px;
	line-height: 26px;
	font-weight: normal;
	color: #333;
}
.props {
	display: grid;
	grid-template-columns: 71px 1fr;
	grid-auto-rows: 21px;
	margin-left: 17px;
}
.props > * {
	min-width: 0;
	border-bottom: 1px solid #dcdfe7;
}
.props > label {
	padding: 3px 0 0 3px;
	border-right: 1px solid #dcdfe7;
	white-space: nowrap;
}
.props > input {
	padding: 2px 0 0 4px;
	background-color: #fff;
}
.props > input[readonly] {
	background-color: transparent;
}
.cell {
	padding: 1px 1px 0;
}
.cell input {
	margin: 3px 1px;
}
.cell .push {
	width: 100%;
	height: 19px;
	color: #000;
}
.push {
	background-color: #e1e1e1;
	border: 1px solid #adadad;
}
.combo {
	position: relative;
	background-color: #fff;
}
.combo select {
	appearance: none;
	width: 100%;
	height: 20px;
	padding: 1px 0 0 3px;
}
.combo svg {
	position: absolute;
	top: 1px;
	right: 1px;
	width: 19px;
	height: 19px;
	border: 1px solid #adadad;
	background-color: #e1e1e1;
	fill: none;
	stroke: #444;
	pointer-events: none;
}
.file {
	display: flex;
	padding: 1px 1px 0 2px;
	background-color: #fff;
}
.file input {
	flex: 1;
	width: 0;
}
.file .push {
	width: 19px;
	height: 19px;
}

input[type=checkbox] {
	appearance: none;
	flex: none;
	display: block;
	width: 13px;
	height: 13px;
	border: 1px solid #222;
	background-color: #fff;
}
input[type=checkbox]:checked::after {
	content: "";
	display: block;
	width: 4px;
	height: 8px;
	margin: 0 0 0 4px;
	border: solid #222;
	border-width: 0 1px 1px 0;
	transform: rotate(45deg);
}
input[type=checkbox]:disabled {
	border-color: #b4b4b4;
	background-color: #dcdcdc;
}
input[type=checkbox].small {
	width: 11px;
	height: 11px;
	margin-right: 1px;
}

/* object snaps and status bar */
.osnap {
	display: flex;
	align-items: center;
	gap: 8px;
	flex: none;
	height: 18px;
	margin: 8px 0 1px 3px;
	padding-left: 5px;
	border-left: 1px solid #c3cadb;
}
.osnap label {
	display: flex;
	align-items: center;
	gap: 3px;
}
.status {
	display: grid;
	grid-template-columns: 51px 88px 88px 88px 88px 168px 97px 38px 51px 50px 74px 58px 88px 41px 89px;
	flex: none;
	height: 20px;
	border-top: 1px solid #b9c0d2;
}
.status > * {
	padding: 1px 0;
	border-right: 1px solid #c3c9d8;
	text-align: center;
	white-space: nowrap;
	overflow: hidden;
}
.status .layer {
	display: flex;
	align-items: center;
	gap: 2px;
	padding-left: 3px;
}
.status i {
	width: 14px;
	height: 14px;
	background-color: #000;
}
.status .on {
	background-color: #ccd5ee;
	font-weight: bold;
}
```
FILE: grid.js
```js
// construction plane grid: 70 units each way, a thick line every 5
const EXTENT = 70;
const UNIT = 10.62;
const CAMERA = { distance: 99.564, lens: 50 };

function parallel(x, y) {
	return [Math.round(x * UNIT) - 0.5, Math.round(-y * UNIT) + 0.5];
}

// camera looks at the origin from (43.111, -74.673, 49.782)
function perspective(height) {
	const focal = height / 2 / (12 / CAMERA.lens);
	return function(x, y) {
		const k = focal / (CAMERA.distance - 0.433 * x + 0.75 * y);
		return [(0.866 * x + 0.5 * y) * k, -(-0.25 * x + 0.433 * y) * k];
	};
}

// cut a line before it goes behind the camera
function clip(a, b) {
	const depth = (p) => CAMERA.distance - 0.433 * p[0] + 0.75 * p[1] - 8;
	const da = depth(a), db = depth(b);
	if (da > 0 && db > 0) return [a, b];
	const t = da / (da - db);
	const mid = [a[0] + (b[0] - a[0]) * t, a[1] + (b[1] - a[1]) * t];
	return da > 0 ? [a, mid] : [mid, b];
}

function draw(view) {
	const svg = view.querySelector('.cplane');
	const w = view.clientWidth, h = view.clientHeight;
	const persp = view.dataset.view === 'perspective';
	const project = persp ? perspective(h) : parallel;
	const line = (a, b) => {
		const [p, q] = persp ? clip(a, b) : [a, b];
		return 'M' + project(p[0], p[1]) + 'L' + project(q[0], q[1]);
	};
	let thin = '', thick = '';
	for (let i = -EXTENT; i <= EXTENT; i++) {
		const d = line([i, -EXTENT], [i, EXTENT]) + line([-EXTENT, i], [EXTENT, i]);
		if (i % 5) thin += d; else thick += d;
	}
	svg.setAttribute('viewBox', `${-Math.round(w / 2)} ${-Math.round(h / 2)} ${w} ${h}`);
	svg.innerHTML = `<path class="thin" d="${thin}"/><path class="thick" d="${thick}"/>
		<path class="x-axis" d="${line([0, 0], [EXTENT, 0])}"/>
		<path class="y-axis" d="${line([0, 0], [0, EXTENT])}"/>`;
	if (!persp) {
		svg.querySelectorAll('.x-axis, .y-axis').forEach((axis) => {
			axis.setAttribute('shape-rendering', 'crispEdges');
		});
	}
}

function drawAll() {
	document.querySelectorAll('.viewport').forEach(draw);
}
window.addEventListener('resize', drawAll);
drawAll();
```
